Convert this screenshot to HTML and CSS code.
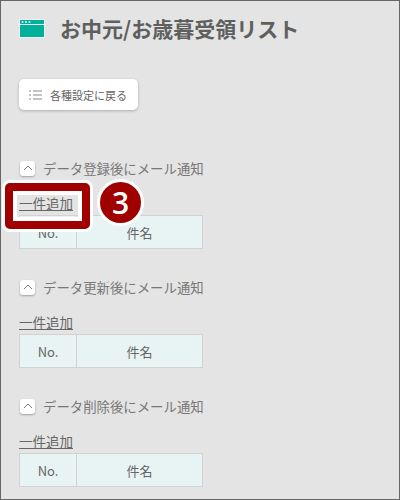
FILE: index.html
```html
<!DOCTYPE html>
<html lang="ja">
<head>
    <meta charset="UTF-8">
    <title>お中元/お歳暮受領リスト</title>
    <link rel="stylesheet" href="styles.css">
</head>
<body>
    <div class="frame">
        <div class="title-row">
            <svg class="title-icon" width="26" height="19" viewBox="0 0 26 19">
                <rect x="0.5" y="0.5" width="25" height="18" fill="#00b09b" stroke="#f2f2f2"/>
                <rect x="1" y="5" width="24" height="1" fill="#e4f5f2"/>
                <circle cx="3.5" cy="3" r="1" fill="#fff"/>
                <circle cx="7" cy="3" r="1" fill="#fff"/>
                <circle cx="10.5" cy="3" r="1" fill="#fff"/>
            </svg>
            <h1 class="title">お中元/お歳暮受領リスト</h1>
        </div>

        <button type="button" class="back-btn">
            <svg class="list-icon" width="13" height="10" viewBox="0 0 13 10">
                <path d="M0 1h2M4 1h9M0 5h2M4 5h9M0 9h2M4 9h9" stroke="#8a8a8a" stroke-width="1.2" fill="none"/>
            </svg>
            各種設定に戻る
        </button>

        <div class="section first">
            <div class="section-head">
                <span class="toggle"><svg width="10" height="6" viewBox="0 0 10 6"><path d="M1 5l4-4 4 4" stroke="#777" stroke-width="1" fill="none"/></svg></span>
                データ登録後にメール通知
            </div>
            <a class="add-link" href="#">一件追加</a>
            <div class="grid-head">
                <div class="cell no">No.</div>
                <div class="cell">件名</div>
            </div>
        </div>

        <div class="section">
            <div class="section-head">
                <span class="toggle"><svg width="10" height="6" viewBox="0 0 10 6"><path d="M1 5l4-4 4 4" stroke="#777" stroke-width="1" fill="none"/></svg></span>
                データ更新後にメール通知
            </div>
            <a class="add-link" href="#">一件追加</a>
            <div class="grid-head">
                <div class="cell no">No.</div>
                <div class="cell">件名</div>
            </div>
        </div>

        <div class="section">
            <div class="section-head">
                <span class="toggle"><svg width="10" height="6" viewBox="0 0 10 6"><path d="M1 5l4-4 4 4" stroke="#777" stroke-width="1" fill="none"/></svg></span>
                データ削除後にメール通知
            </div>
            <a class="add-link" href="#">一件追加</a>
            <div class="grid-head">
                <div class="cell no">No.</div>
                <div class="cell">件名</div>
            </div>
        </div>

        <!-- annotation over the first link -->
        <div class="callout-box"></div>
        <div class="callout-num">3</div>
    </div>
</body>
</html>
```

FILE: styles.css
```css
* {
    box-sizing: border-box;
}
body {
    margin: 0;
    font-family: "Noto Sans CJK JP", "Noto Sans", sans-serif;
    color: #666;
}
.frame {
    position: relative;
    width: 400px;
    height: 500px;
    padding: 17px 0 0 18px;
    background-color: #e4e4e4;
    border: 1px solid #666;
    overflow: hidden;
}
.title-row {
    display: flex;
    align-items: center;
    height: 20px;
}
.title-icon {
    flex: none;
}
.title {
    margin: -1px 0 0 15px;
    font-size: 21px;
    font-weight: 700;
    line-height: 20px;
    color: #5f5f5f;
    white-space: nowrap;
}
.back-btn {
    display: flex;
    align-items: center;
    width: 119px;
    height: 31px;
    margin-top: 41px;
    padding: 0 0 0 10px;
    border: none;
    border-radius: 5px;
    background-color: #fff;
    box-shadow: 0 1px 3px rgba(0, 0, 0, 0.25);
    font-family: inherit;
    font-size: 11px;
    color: #666;
}
.list-icon {
    margin-right: 8px;
}
.section {
    margin-top: 28px;
}
.section.first {
    margin-top: 48px;
}
.section-head {
    display: flex;
    align-items: center;
    height: 20px;
    font-size: 13.4px;
    color: #777;
}
.toggle {
    display: flex;
    align-items: center;
    justify-content: center;
    width: 15px;
    height: 15px;
    margin: 0 8px 0 1px;
    border-radius: 3px;
    background-color: #fff;
    box-shadow: 0 1px 2px rgba(0, 0, 0, 0.3);
}
.add-link {
    display: block;
    width: max-content;
    margin-top: 16px;
    font-size: 13.5px;
    line-height: 18px;
    color: #666;
}
.grid-head {
    display: flex;
    width: 184px;
    height: 34px;
    margin-top: 3px;
    border: 1px solid #d2d2d2;
    background-color: #e8f3f3;
}
.cell {
    flex: 1;
    display: flex;
    align-items: center;
    justify-content: center;
    font-size: 13px;
    color: #666;
}
.cell.no {
    flex: none;
    width: 57px;
    border-right: 1px solid #d2d2d2;
}
.callout-box {
    position: absolute;
    left: 4px;
    top: 182px;
    width: 85px;
    height: 46px;
    border: 8px solid #a00000;
    border-radius: 5px;
    box-shadow: 0 0 0 3px #fff, inset 0 0 0 4px #fff;
}
.callout-num {
    position: absolute;
    left: 96px;
    top: 178px;
    width: 47px;
    height: 47px;
    border: 3px solid #fff;
    border-radius: 50%;
    background-color: #a00000;
    color: #fff;
    font-family: "Open Sans", sans-serif;
    font-size: 30px;
    font-weight: 600;
    line-height: 41px;
    text-align: center;
}
```
